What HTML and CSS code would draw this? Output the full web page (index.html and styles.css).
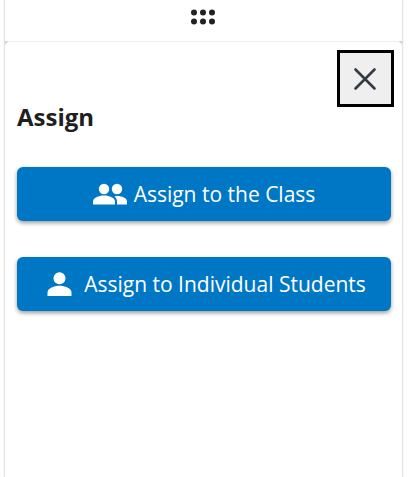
FILE: index.html
```html
<!DOCTYPE html>
<html lang="en">
<head>
<meta charset="utf-8">
<title>Assign</title>
<link rel="stylesheet" href="styles.css">
</head>
<body>
<div class="panel">
  <div class="grip-bar">
    <svg class="grip" width="26" height="16" viewBox="0 0 26 16" aria-hidden="true">
      <circle cx="4" cy="3.5" r="3"/><circle cx="13" cy="3.5" r="3"/><circle cx="22" cy="3.5" r="3"/>
      <circle cx="4" cy="12.5" r="3"/><circle cx="13" cy="12.5" r="3"/><circle cx="22" cy="12.5" r="3"/>
    </svg>
  </div>
  <div class="sheet">
    <div class="close-row">
      <button class="close" aria-label="Close">
        <svg width="24" height="24" viewBox="0 0 24 24" aria-hidden="true"><path d="M2.5 2.5 21.5 21.5M21.5 2.5 2.5 21.5"/></svg>
      </button>
    </div>
    <h2 class="title">Assign</h2>
    <div class="actions">
      <button class="action">
        <svg class="icon-group" width="34" height="22" viewBox="0 0 34 22" aria-hidden="true">
          <circle cx="11" cy="6" r="5.2"/><circle cx="24" cy="6" r="5.2"/>
          <path d="M0 21.5v-3C0 15 5.5 12.6 11 12.6s11 2.4 11 5.9v3z"/>
          <path d="M24 21.5v-3.2c0-2-.9-3.6-2.6-4.9.9-.2 1.8-.4 2.8-.4 4.7 0 9.8 2.1 9.8 5.3v3.2z"/>
        </svg>
        <span>Assign to the Class</span>
      </button>
      <button class="action">
        <svg class="icon-person" width="25" height="24" viewBox="0 0 25 24" aria-hidden="true">
          <circle cx="12.5" cy="6.3" r="6"/>
          <path d="M0.5 24v-3.5c0-4.5 7-6.8 12-6.8s12 2.3 12 6.8V24z"/>
        </svg>
        <span>Assign to Individual Students</span>
      </button>
    </div>
  </div>
</div>
</body>
</html>
```
FILE: styles.css
```css
* { box-sizing: border-box; }
html, body { margin: 0; height: 100%; background: #fff; }
body { overflow: hidden; font-family: "Open Sans", "Liberation Sans", sans-serif; color: #1f1f1f; }
.panel {
  width: 399px;
  height: 477px;
  margin-left: 4px;
  border-left: 1px solid #e4e4e4;
  border-right: 1px solid #e4e4e4;
  box-shadow: 0 0 2px rgba(0, 0, 0, .08);
  background: #d0d0d0;
  display: flex;
  flex-direction: column;
}
.grip-bar { height: 41px; display: flex; justify-content: center; padding-top: 9px; flex: none; background: #fff; }
.grip { fill: #222; display: block; margin-left: -1px; }
.sheet {
  flex: 1;
  background: #fff;
  border-top: 1px solid #f0f0f0;
  border-radius: 5px 5px 0 0;
  padding: 8px 12px 0;
}
.close-row { display: flex; justify-content: flex-end; margin-right: -4px; }
.close {
  width: 57px;
  height: 57px;
  padding: 0 2px 0 0;
  background: #efefef;
  border: 3px solid #000;
  display: flex;
  align-items: center;
  justify-content: center;
}
.close svg { fill: none; stroke: #333a42; stroke-width: 2.6; stroke-linecap: round; display: block; }
.title {
  margin: -5px 0 0;
  font-size: 24px;
  line-height: 30px;
  font-weight: 700;
  color: #1f1f1f;
}
.actions { display: flex; flex-direction: column; gap: 36px; margin-top: 35px; width: 374px; }
.action {
  height: 54px;
  border: 0;
  border-radius: 6px;
  background: #0077c5;
  color: #fff;
  font: 400 21px/28px "Open Sans", "Liberation Sans", sans-serif;
  box-shadow: 0 2px 4px rgba(0, 0, 0, .4);
  display: flex;
  align-items: center;
  justify-content: center;
  gap: 7px;
  padding: 0;
}
.action svg { fill: #fff; display: block; flex: none; }
.action:last-child { gap: 12px; padding-left: 5px; }
```
